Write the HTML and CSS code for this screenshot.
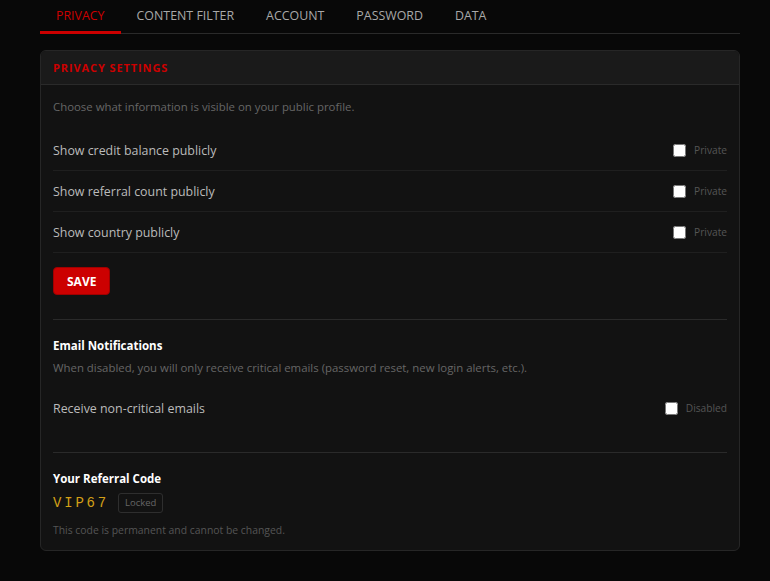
FILE: index.html
```html
<!DOCTYPE html>
<html lang="en">
<head>
    <meta charset="UTF-8">
    <meta name="viewport" content="width=device-width, initial-scale=1.0">
    <title>Settings</title>
    <link rel="stylesheet" href="styles.css">
</head>
<body>
    <div class="page">
        <nav class="tabs">
            <a class="tab active">PRIVACY</a>
            <a class="tab">CONTENT FILTER</a>
            <a class="tab">ACCOUNT</a>
            <a class="tab">PASSWORD</a>
            <a class="tab">DATA</a>
        </nav>

        <div class="card">
            <div class="card-header">PRIVACY SETTINGS</div>
            <div class="card-body">
                <p class="hint">Choose what information is visible on your public profile.</p>

                <div class="setting-row">
                    <span class="label">Show credit balance publicly</span>
                    <label class="toggle"><input type="checkbox"> Private</label>
                </div>
                <div class="setting-row">
                    <span class="label">Show referral count publicly</span>
                    <label class="toggle"><input type="checkbox"> Private</label>
                </div>
                <div class="setting-row">
                    <span class="label">Show country publicly</span>
                    <label class="toggle"><input type="checkbox"> Private</label>
                </div>

                <button class="btn-save">SAVE</button>

                <div class="section">
                    <h4>Email Notifications</h4>
                    <p class="hint">When disabled, you will only receive critical emails (password reset, new login alerts, etc.).</p>
                    <div class="setting-row last">
                        <span class="label">Receive non-critical emails</span>
                        <label class="toggle"><input type="checkbox"> Disabled</label>
                    </div>
                </div>

                <div class="section referral">
                    <h4>Your Referral Code</h4>
                    <div class="code-line">
                        <span class="code">VIP67</span>
                        <span class="badge">Locked</span>
                    </div>
                    <p class="note">This code is permanent and cannot be changed.</p>
                </div>
            </div>
        </div>
    </div>
</body>
</html>
```

FILE: styles.css
```css
body {
    margin: 0;
    background-color: #080808;
    font-family: "Open Sans", "Noto Sans", Arial, sans-serif;
    color: #bbb;
}
.page {
    width: 700px;
    padding-left: 40px;
}
.tabs {
    display: flex;
    border-bottom: 1px solid #2a2a2a;
}
.tab {
    padding: 8px 16px 0;
    height: 23px;
    line-height: 16px;
    font-size: 12.4px;
    color: #a9a9a9;
    border-bottom: 3px solid transparent;
    margin-bottom: -1px;
    cursor: pointer;
}
.tab.active {
    color: #cc0000;
    border-bottom-color: #cc0000;
}
.card {
    margin-top: 16px;
    background: #121212;
    border: 1px solid #262626;
    border-radius: 6px;
    overflow: hidden;
}
.card-header {
    height: 33px;
    line-height: 33px;
    padding: 0 12px;
    background: #1a1a1a;
    border-bottom: 1px solid #2a2a2a;
    color: #cc0000;
    font-size: 11px;
    font-weight: bold;
    letter-spacing: 0.9px;
}
.card-body {
    padding: 14px 12px 13px;
}
.hint {
    margin: 0;
    font-size: 11.4px;
    line-height: 16px;
    color: #666;
}
.card-body > .hint {
    margin-bottom: 15px;
}
.setting-row {
    display: flex;
    justify-content: space-between;
    align-items: center;
    height: 40px;
    border-bottom: 1px solid #1f1f1f;
}
.setting-row.last {
    border-bottom: none;
    margin-top: 12px;
}
.label {
    font-size: 12.4px;
}
.toggle {
    display: flex;
    align-items: center;
    gap: 8px;
    font-size: 10.2px;
    color: #555;
}
.toggle input {
    margin: 0;
    width: 13px;
    height: 13px;
}
.btn-save {
    margin-top: 14px;
    height: 28px;
    padding: 0 13px;
    background: #cc0000;
    border: 1px solid #a00000;
    border-radius: 4px;
    color: #fff;
    font-family: inherit;
    font-size: 12px;
    font-weight: bold;
}
.section {
    margin-top: 24px;
    border-top: 1px solid #2a2a2a;
    padding-top: 18px;
    padding-bottom: 24px;
}
.section h4 {
    margin: 0 0 6px;
    font-size: 11.5px;
    line-height: 16px;
    color: #fff;
}
.referral {
    padding-bottom: 0;
    margin-top: 0;
}
.code-line {
    display: flex;
    align-items: center;
    gap: 9px;
}
.code {
    font-family: "Liberation Mono", "Courier New", monospace;
    font-size: 14px;
    letter-spacing: 2.8px;
    color: #d4a017;
}
.badge {
    font-size: 9.5px;
    line-height: 18px;
    padding: 0 6px;
    border: 1px solid #2e2e2e;
    border-radius: 3px;
    color: #666;
}
.note {
    margin: 10px 0 0;
    font-size: 10.4px;
    color: #555;
}
```
